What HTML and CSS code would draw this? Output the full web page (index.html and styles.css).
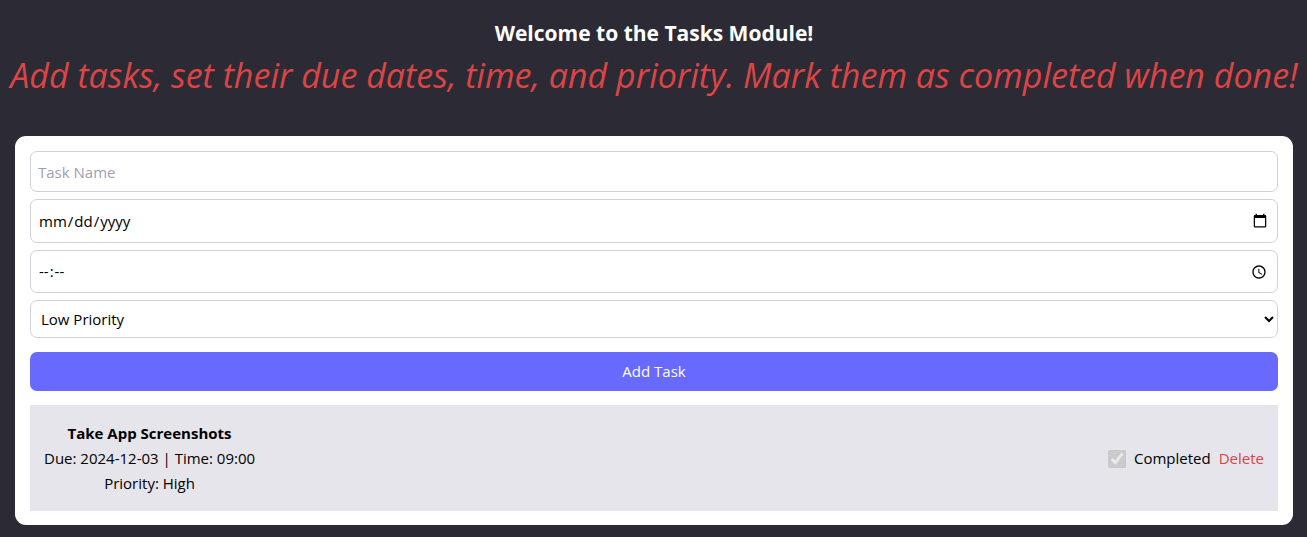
FILE: index.html
```html
<!DOCTYPE html>
<html lang="en">
<head>
<meta charset="utf-8">
<meta name="viewport" content="width=device-width, initial-scale=1">
<title>Tasks</title>
<link rel="stylesheet" href="styles.css">
</head>
<body>
<main class="tasks">
  <header class="intro">
    <h1 class="title">Welcome to the Tasks Module!</h1>
    <p class="subtitle">Add tasks, set their due dates, time, and priority. Mark them as completed when done!</p>
  </header>
  <section class="card">
    <form class="task-form">
      <input class="field field-name" type="text" placeholder="Task Name" aria-label="Task Name">
      <input class="field field-date" type="date" aria-label="Due date">
      <input class="field field-time" type="time" aria-label="Due time">
      <select class="field field-priority" aria-label="Priority">
        <option>Low Priority</option>
        <option>Medium Priority</option>
        <option>High Priority</option>
      </select>
      <button class="add" type="button">Add Task</button>
    </form>
    <ul class="task-list">
      <li class="task">
        <div class="details">
          <h2 class="task-name">Take App Screenshots</h2>
          <p>Due: 2024-12-03 | Time: 09:00</p>
          <p>Priority: High</p>
        </div>
        <div class="actions">
          <label class="done"><input class="check" type="checkbox" checked disabled>Completed</label>
          <button class="delete" type="button">Delete</button>
        </div>
      </li>
    </ul>
  </section>
</main>
</body>
</html>
```
FILE: styles.css
```css
* {
  box-sizing: border-box;
  margin: 0;
  padding: 0;
}

body {
  background: #2c2b35;
  color: #000;
  font: 15px/25px "Segoe UI", "Open Sans", sans-serif;
}

input,
select,
button {
  font: inherit;
  color: inherit;
}

.tasks {
  padding: 15px 14px 12px 15px;
}

.intro {
  display: flex;
  flex-direction: column;
  align-items: center;
  margin-bottom: 37px;
}

.title {
  color: #fff;
  font-size: 21px;
  font-weight: 700;
  line-height: 37px;
}

.subtitle {
  color: #db4545;
  font-size: 34px;
  font-style: italic;
  line-height: 47px;
  white-space: nowrap;
}

.card {
  padding: 15px 15px 14px;
  background: #fff;
  border-radius: 11px;
}

.task-form {
  display: flex;
  flex-direction: column;
  gap: 7px;
}

.field {
  width: 100%;
  padding: 7px;
  background: #fff;
  border: 1px solid #d1d1db;
  border-radius: 7px;
}

.field::-webkit-calendar-picker-indicator {
  width: 16px;
  height: 16px;
}

.field-name {
  height: 41px;
}

.field-name::placeholder {
  color: #a0a0b2;
}

.field-date {
  height: 44px;
}

.field-time {
  height: 43px;
}

.field-time::-webkit-datetime-edit-ampm-field {
  display: none;
}

.field-priority {
  height: 38px;
  padding: 6px;
}

.add {
  height: 39px;
  margin-top: 7px;
  background: #6769ff;
  border: 0;
  border-radius: 7px;
  color: #fff;
}

.task-list {
  margin-top: 14px;
  list-style: none;
}

.task {
  display: flex;
  align-items: center;
  justify-content: space-between;
  padding: 16px 14px 15px;
  background: #e6e5eb;
}

.details {
  text-align: center;
}

.task-name {
  font-size: 15px;
  font-weight: 700;
}

.actions,
.done {
  display: flex;
  align-items: center;
  gap: 8px;
}

.check {
  width: 18px;
  height: 18px;
}

.delete {
  background: none;
  border: 0;
  color: #db4545;
}
```
